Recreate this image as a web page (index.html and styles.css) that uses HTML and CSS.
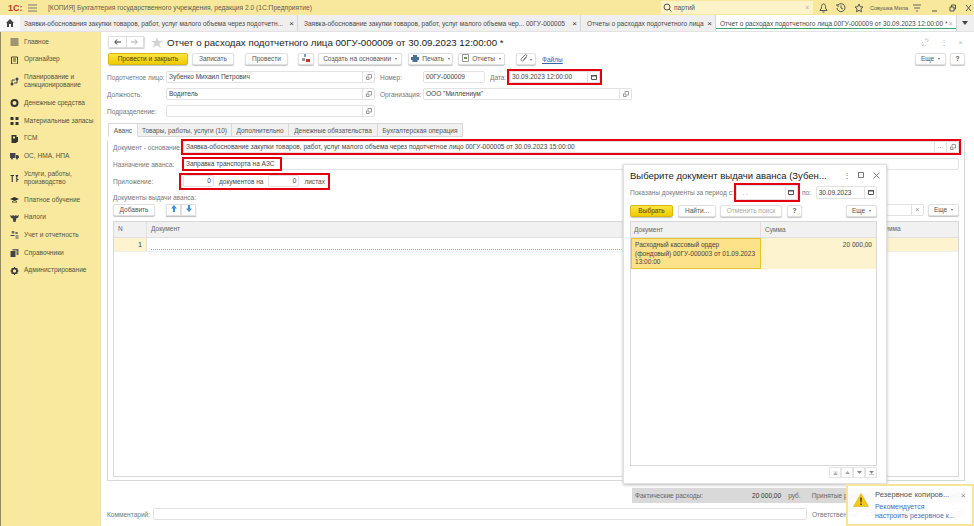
FILE: index.html
```html
<!DOCTYPE html>
<html lang="ru">
<head>
    <meta charset="UTF-8">
    <title>Отчет о расходах подотчетного лица</title>
    <link rel="stylesheet" href="styles.css">
</head>
<body>
    <header class="topbar">
        <span class="logo">1С:</span>
        <svg class="burger" width="9" height="8" viewBox="0 0 9 8"><path d="M0 1h9M0 4h9M0 7h9" stroke="#777" stroke-width="1"/></svg>
        <span class="app-title">[КОПИЯ] Бухгалтерия государственного учреждения, редакция 2.0 (1С:Предприятие)</span>
        <div class="search">
            <svg width="9" height="9" viewBox="0 0 9 9"><circle cx="4" cy="4" r="3" fill="none" stroke="#555"/><path d="M6 6l2.500 2.500" stroke="#555"/></svg>
            <span class="search-text">партий</span>
            <span class="search-x">×</span>
        </div>
        <div class="top-icons">
            <svg class="ti-bell" width="9" height="10" viewBox="0 0 9 10"><path d="M4.500 1C2.500 1 2.500 3 2.500 5L1 7.500h7L6.500 5C6.500 3 6.500 1 4.500 1zM3.500 9h2" fill="none" stroke="#555"/></svg>
            <svg class="ti-hist" width="10" height="10" viewBox="0 0 10 10"><path d="M2 2a4 4 0 1 1-1 3M5 2.500V5l2 1M1 1v2h2" fill="none" stroke="#555"/></svg>
            <svg class="ti-star" width="10" height="10" viewBox="0 0 10 10"><path d="M5 1l1.200 2.700 2.800.3-2.100 1.900.6 2.900L5 7.400 2.500 8.800l.6-2.900L1 4l2.800-.3z" fill="none" stroke="#555"/></svg>
            <span class="user">Совушка Мила</span>
            <svg class="ti-menu" width="9" height="8" viewBox="0 0 9 8"><path d="M0 1h8M1 4h6M3 7h2" stroke="#666"/></svg>
            <svg class="ti-min" width="7" height="8" viewBox="0 0 7 8"><path d="M1 7h5" stroke="#555"/></svg>
            <svg class="ti-max" width="7" height="8" viewBox="0 0 7 8"><path d="M1 3h4v4H1zM2.500 3V1h4v4H5" fill="none" stroke="#555"/></svg>
            <svg class="ti-close" width="7" height="8" viewBox="0 0 7 8"><path d="M1 1l5 6M6 1L1 7" stroke="#555"/></svg>
        </div>
    </header>

    <nav class="tabbar">
        <div class="home">
            <svg width="8" height="8" viewBox="0 0 8 8"><path d="M4 0L0 4h1v4h2V5h2v3h2V4h1z" fill="#444"/></svg>
        </div>
        <div class="wtab tab-1"><span class="wtab-text">Заявки-обоснования закупки товаров, работ, услуг малого объема через подотчетн...</span><i>×</i></div>
        <div class="wtab tab-2"><span class="wtab-text">Заявка-обоснование закупки товаров, работ, услуг малого объема чер... 00ГУ-000005</span><i>×</i></div>
        <div class="wtab tab-3"><span class="wtab-text">Отчеты о расходах подотчетного лица</span><i>×</i></div>
        <div class="wtab wtab-active tab-4"><span class="wtab-text">Отчет о расходах подотчетного лица 00ГУ-000009 от 30.09.2023 12:00:00 *</span><i>×</i></div>
        <svg class="tabs-more" width="6" height="4" viewBox="0 0 6 4"><path d="M0 0h6L3 4z" fill="#444"/></svg>
    </nav>

    <div class="workspace">
        <aside class="sidebar">
            <div class="side-item"><svg width="8" height="8" viewBox="0 0 8 8"><path d="M0 1h8M0 3h8M0 5h8M0 7h8" stroke="#444"/></svg><span>Главное</span></div>
            <div class="side-item"><svg width="8" height="8" viewBox="0 0 8 8"><path d="M1 1h6v7H1zM2.500 3h3M2.500 5h3" fill="none" stroke="#444"/></svg><span>Органайзер</span></div>
            <div class="side-item side-double"><svg width="9" height="9" viewBox="0 0 9 9"><circle cx="2" cy="7" r="1.500" fill="#444"/><circle cx="7" cy="2" r="1.500" fill="#444"/><path d="M2 6V3h3M7 3v3H4" fill="none" stroke="#444"/></svg><span>Планирование и санкционирование</span></div>
            <div class="side-item"><svg width="8" height="8" viewBox="0 0 8 8"><circle cx="4" cy="4" r="3" fill="none" stroke="#333" stroke-width="2"/></svg><span>Денежные средства</span></div>
            <div class="side-item"><svg width="8" height="8" viewBox="0 0 8 8"><path d="M0 0h3v3H0zM5 0h3v3H5zM0 5h3v3H0zM5 5h3v3H5z" fill="#333"/></svg><span>Материальные запасы</span></div>
            <div class="side-item"><svg width="8" height="8" viewBox="0 0 8 8"><path d="M1 0h5v8H1zM6 2h1.500v5H6z" fill="#333"/><path d="M2.500 1.500h2v2h-2z" fill="#f9e99e"/></svg><span>ГСМ</span></div>
            <div class="side-item"><svg width="9" height="8" viewBox="0 0 9 8"><path d="M0 1h5.500v5H0zM6 3h2l1 1.500V6H6z" fill="#444"/><circle cx="2" cy="6.500" r="1" fill="#444"/><circle cx="7" cy="6.500" r="1" fill="#444"/></svg><span>ОС, НМА, НПА</span></div>
            <div class="side-item side-double"><svg width="8" height="8" viewBox="0 0 8 8"><path d="M0 1h3.500v1H2.300v6H1.200V2H0zM5 1h3L6.800 3v2H8v1H6.800v2H5.800V3z" fill="#333"/></svg><span>Услуги, работы, производство</span></div>
            <div class="side-item"><svg width="9" height="8" viewBox="0 0 9 8"><path d="M4.500 1L9 3 4.500 5 0 3z" fill="#333"/><path d="M2 5v1.500h5V5L4.500 6z" fill="#333"/></svg><span>Платное обучение</span></div>
            <div class="side-item"><svg width="9" height="8" viewBox="0 0 9 8"><path d="M0 1l2 1 1-1 1.500 1L6 1l1 1 2-1-1 3H6.500L5.500 8h-2l-1-4H1z" fill="#444"/></svg><span>Налоги</span></div>
            <div class="side-item"><svg width="8" height="8" viewBox="0 0 8 8"><path d="M1 1h3M2.500 0v3M0 4.500h4M5 5h3M5 7h3M5 1l2 2M7 1L5 3" stroke="#444" fill="none"/></svg><span>Учет и отчетность</span></div>
            <div class="side-item"><svg width="8" height="8" viewBox="0 0 8 8"><path d="M0 2h5v6H0z" fill="#444"/><path d="M2 0h6v6H6V1.500H2z" fill="#666"/></svg><span>Справочники</span></div>
            <div class="side-item"><svg width="8" height="8" viewBox="0 0 8 8"><circle cx="4" cy="4" r="2.500" fill="none" stroke="#333" stroke-width="1.600"/><path d="M4 0v1.500M4 6.500V8M0 4h1.500M6.500 4H8M1.200 1.200l1 1M5.800 5.800l1 1M1.200 6.800l1-1M5.800 2.200l1-1" stroke="#333"/></svg><span>Администрирование</span></div>
        </aside>

        <main class="form">
            <div class="title-row">
                <div class="nav-buttons">
                    <button class="nav-btn"><svg width="7" height="6" viewBox="0 0 7 6"><path d="M7 3H1M3 .5L.8 3 3 5.500" fill="none" stroke="#333"/></svg></button>
                    <button class="nav-btn"><svg width="7" height="6" viewBox="0 0 7 6"><path d="M0 3h6M4 .5L6.200 3 4 5.500" fill="none" stroke="#aaa"/></svg></button>
                </div>
                <svg class="title-star" width="12" height="11" viewBox="0 0 12 11"><path d="M6 0l1.500 4H12L8.400 6.600 9.700 11 6 8.300 2.300 11l1.300-4.400L0 4h4.500z" fill="#d2d2d2"/></svg>
                <h1 class="doc-title">Отчет о расходах подотчетного лица 00ГУ-000009 от 30.09.2023 12:00:00 *</h1>
                <div class="title-tools">
                    <svg width="9" height="9" viewBox="0 0 9 9"><path d="M1 8l2-2M4 2l1-1c1-1 3 1 2 2L6 4M5 7L4 8C3 9 0 6 1 5l1-1" fill="none" stroke="#ccc"/></svg>
                    <span>⋮</span>
                    <span>×</span>
                </div>
            </div>

            <div class="command-bar">
                <button class="btn btn-primary btn-post-close">Провести и закрыть</button>
                <button class="btn btn-save">Записать</button>
                <button class="btn btn-post">Провести</button>
                <button class="btn btn-icon"><svg width="8" height="8" viewBox="0 0 8 8"><path d="M2 0h2v3H2z" fill="#7a9cc4"/><path d="M4 5h4v3H4z" fill="#c0392b"/><path d="M0 4h3v3H0z" fill="#999"/></svg></button>
                <button class="btn btn-create">Создать на основании <b class="caret"></b></button>
                <button class="btn btn-print"><svg width="8" height="7" viewBox="0 0 8 7"><path d="M2 0h4v2H2zM0 2h8v3H6.500v2h-5V5H0z" fill="#4a6d91"/></svg>Печать <b class="caret"></b></button>
                <button class="btn btn-reports"><svg width="7" height="8" viewBox="0 0 7 8"><path d="M.5.500h6v7h-6z" fill="#fff" stroke="#999"/><path d="M2 5h3V3H2z" fill="#6a9955"/></svg>Отчеты <b class="caret"></b></button>
                <button class="btn btn-clip"><svg width="8" height="8" viewBox="0 0 8 8"><path d="M6.500 3L3.500 6.500C2 8 0 6 1.500 4.500L5 1c1-1 2.500.5 1.500 1.500L3.500 5.500" fill="none" stroke="#777"/></svg><b class="caret"></b></button>
                <a class="files-link"><span>Файлы</span></a>
                <button class="btn btn-more">Еще <b class="caret"></b></button>
                <button class="btn btn-help">?</button>
            </div>

            <div class="field-row row-1">
                <label class="lbl lbl-main">Подотчетное лицо:</label>
                <div class="field field-main">Зубенко Михаил Петрович<span class="field-btn"><svg width="6" height="6" viewBox="0 0 6 6"><path d="M2 .5h3.500V4H2zM.5 2.500v3h3" fill="none" stroke="#999"/></svg></span></div>
                <label class="lbl lbl-number">Номер:</label>
                <div class="field field-number">00ГУ-000009</div>
                <label class="lbl lbl-date">Дата:</label>
                <div class="field field-date marked">30.09.2023 12:00:00<span class="field-btn"><svg width="6" height="6" viewBox="0 0 6 6"><path d="M.5 1.500h5v4h-5z" fill="none" stroke="#555"/><path d="M0 1h6v1.500H0z" fill="#555"/></svg></span></div>
            </div>
            <div class="field-row">
                <label class="lbl lbl-main">Должность:</label>
                <div class="field field-main">Водитель<span class="field-btn"><svg width="6" height="6" viewBox="0 0 6 6"><path d="M2 .5h3.500V4H2zM.5 2.500v3h3" fill="none" stroke="#999"/></svg></span></div>
                <label class="lbl lbl-number">Организация:</label>
                <div class="field field-org">ООО "Миллениум"<span class="field-btn"><svg width="6" height="6" viewBox="0 0 6 6"><path d="M2 .5h3.500V4H2zM.5 2.500v3h3" fill="none" stroke="#999"/></svg></span></div>
            </div>
            <div class="field-row">
                <label class="lbl lbl-main">Подразделение:</label>
                <div class="field field-main"><span class="field-btn"><svg width="6" height="6" viewBox="0 0 6 6"><path d="M2 .5h3.500V4H2zM.5 2.500v3h3" fill="none" stroke="#999"/></svg></span></div>
            </div>

            <div class="form-tabs">
                <span class="ftab ftab-active">Аванс</span>
                <span class="ftab">Товары, работы, услуги (10)</span>
                <span class="ftab">Дополнительно</span>
                <span class="ftab">Денежные обязательства</span>
                <span class="ftab">Бухгалтерская операция</span>
            </div>

            <div class="tab-body">
                <div class="field-row row-base">
                    <label class="lbl lbl-tab">Документ - основание:</label>
                    <div class="field field-base marked">Заявка-обоснование закупки товаров, работ, услуг малого объема через подотчетное лицо 00ГУ-000005 от 30.09.2023 15:00:00<span class="field-btn dots-btn">...</span><span class="field-btn"><svg width="6" height="6" viewBox="0 0 6 6"><path d="M2 .5h3.500V4H2zM.5 2.500v3h3" fill="none" stroke="#999"/></svg></span></div>
                </div>
                <div class="field-row">
                    <label class="lbl lbl-tab">Назначение аванса:</label>
                    <div class="field field-base purpose">
                        <span class="purpose-text">Заправка транспорта на АЗС</span>
                    </div>
                </div>
                <div class="field-row">
                    <label class="lbl lbl-tab">Приложение:</label>
                    <div class="attach marked">
                        <div class="field field-count">0</div>
                        <span>документов на</span>
                        <div class="field field-count">0</div>
                        <span>листах</span>
                    </div>
                </div>

                <div class="section-label">Документы выдачи аванса:</div>
                <div class="table-bar">
                    <button class="btn btn-add">Добавить</button>
                    <div class="arrows">
                        <button class="btn btn-arrow"><svg width="6" height="7" viewBox="0 0 6 7"><path d="M3 0l3 3.500H4V7H2V3.500H0z" fill="#3d8fd1"/></svg></button>
                        <button class="btn btn-arrow"><svg width="6" height="7" viewBox="0 0 6 7"><path d="M3 7l3-3.500H4V0H2v3.500H0z" fill="#3d8fd1"/></svg></button>
                    </div>
                    <div class="table-tools">
                        <div class="field field-table-search"><span class="field-btn">×</span></div>
                        <button class="btn btn-table-more">Еще <b class="caret"></b></button>
                    </div>
                </div>
                <div class="grid">
                    <div class="grid-head">
                        <span class="col-n">N</span>
                        <span class="col-doc">Документ</span>
                        <span class="col-sum">Сумма</span>
                    </div>
                    <div class="grid-row">
                        <span class="col-n cell-current">1</span>
                        <span class="col-doc cell-empty"></span>
                        <span class="col-sum cell-tail"></span>
                    </div>
                </div>
            </div>

            <div class="totals">
                <span class="tot-label">Фактические расходы:</span>
                <span class="tot-sum">20 000,00</span>
                <span class="tot-cur">руб.</span>
                <span class="tot-label">Принятые расходы:</span>
                <span class="tot-end">руб.</span>
            </div>
            <div class="field-row row-comment">
                <label class="lbl lbl-comment">Комментарий:</label>
                <div class="field field-comment"></div>
                <label class="lbl lbl-resp">Ответственный:</label>
                <div class="field field-resp">Совушка Мила<span class="field-btn"><svg width="6" height="6" viewBox="0 0 6 6"><path d="M2 .5h3.500V4H2zM.5 2.500v3h3" fill="none" stroke="#999"/></svg></span></div>
            </div>
        </main>
    </div>

    <section class="dialog">
        <div class="dlg-title-row">
            <h2 class="dlg-title">Выберите документ выдачи аванса (Зубен...</h2>
            <span class="dlg-dots">⋮</span>
            <svg class="dlg-tool" width="6" height="6" viewBox="0 0 6 6"><path d="M.5.500h5v5h-5z" fill="none" stroke="#777"/></svg>
            <svg class="dlg-tool" width="7" height="7" viewBox="0 0 7 7"><path d="M.5.500l6 6M6.500.500l-6 6" stroke="#777"/></svg>
        </div>
        <div class="dlg-period">
            <label class="lbl lbl-from">Показаны документы за период с:</label>
            <div class="field field-from marked"><span class="blank-date">. .</span><span class="field-btn"><svg width="6" height="6" viewBox="0 0 6 6"><path d="M.5 1.500h5v4h-5z" fill="none" stroke="#555"/><path d="M0 1h6v1.500H0z" fill="#555"/></svg></span></div>
            <label class="lbl lbl-to">по:</label>
            <div class="field field-to">30.09.2023<span class="field-btn"><svg width="6" height="6" viewBox="0 0 6 6"><path d="M.5 1.500h5v4h-5z" fill="none" stroke="#555"/><path d="M0 1h6v1.500H0z" fill="#555"/></svg></span></div>
        </div>
        <div class="dlg-bar">
            <button class="btn btn-primary btn-choose">Выбрать</button>
            <button class="btn btn-find">Найти...</button>
            <button class="btn btn-cancel" disabled>Отменить поиск</button>
            <button class="btn btn-dlg-help">?</button>
            <button class="btn btn-dlg-more">Еще <b class="caret"></b></button>
        </div>
        <div class="dlg-grid">
            <div class="dlg-head">
                <span class="dlg-col-doc">Документ</span>
                <span class="dlg-col-sum">Сумма</span>
            </div>
            <div class="dlg-row">
                <span class="dlg-col-doc dlg-current">Расходный кассовый ордер (фондовый) 00ГУ-000003 от 01.09.2023 13:00:00</span>
                <span class="dlg-col-sum dlg-amount">20 000,00</span>
            </div>
        </div>
        <div class="pager">
            <span class="page-btn"><svg width="5" height="4" viewBox="0 0 5 4"><path d="M0 1h5M.5 4l2-2.500 2 2.500z" fill="#aaa" stroke="#aaa" stroke-width=".5"/></svg></span>
            <span class="page-btn"><svg width="5" height="3" viewBox="0 0 5 3"><path d="M0 3l2.500-3L5 3z" fill="#aaa"/></svg></span>
            <span class="page-btn"><svg width="5" height="3" viewBox="0 0 5 3"><path d="M0 0l2.500 3L5 0z" fill="#888"/></svg></span>
            <span class="page-btn"><svg width="5" height="4" viewBox="0 0 5 4"><path d="M0 3.500h5M.5 0l2 2.500L4.500 0z" fill="#888" stroke="#888" stroke-width=".5"/></svg></span>
        </div>
    </section>

    <aside class="notice">
        <svg class="notice-icon" width="16" height="14" viewBox="0 0 16 14"><path d="M8 .5L15.500 13.500H.5z" fill="#f6c915" stroke="#c9a40c" stroke-width=".5"/><path d="M7.200 4.500h1.600L8.500 9.500h-1zM7.200 10.500h1.600V12H7.200z" fill="#333"/></svg>
        <div class="notice-body">
            <div class="notice-title">Резервное копиров...</div>
            <a class="notice-link">Рекомендуется<br>настроить резервное к...</a>
        </div>
        <span class="notice-x">×</span>
    </aside>
</body>
</html>
```

FILE: styles.css
```css
* {
    box-sizing: border-box;
}
html, body {
    margin: 0;
    padding: 0;
}
body {
    position: relative;
    width: 974px;
    height: 526px;
    overflow: hidden;
    font-family: "Liberation Sans", Arial, sans-serif;
    font-size: 6.55px;
    color: #4a4a4a;
    background-color: #fff;
}
button {
    font-family: inherit;
    padding: 0;
}

/* Top bar */
.topbar {
    display: flex;
    align-items: center;
    height: 15px;
    background-color: #f8e89c;
}
.logo {
    width: 28px;
    padding-left: 8px;
    font-size: 9px;
    font-weight: bold;
    color: #c8372d;
}
.burger {
    margin-right: 11px;
}
.app-title {
    width: 613px;
    font-size: 6.660px;
    color: #5f5d4c;
}
.search {
    display: flex;
    align-items: center;
    gap: 2px;
    width: 152px;
    height: 13px;
    padding: 0 4px 0 2px;
    background-color: #fcf4c8;
}
.search-text {
    flex: 1;
    color: #555;
}
.search-x {
    color: #aaa;
}
.top-icons {
    display: flex;
    align-items: center;
    padding-left: 6px;
}
.ti-hist, .ti-star { margin-left: 8px; }
.user {
    width: 38px;
    margin-left: 6px;
    font-size: 5.500px;
    white-space: nowrap;
    color: #555;
}
.ti-menu { margin-left: 5px; }
.ti-min { margin-left: 9px; }
.ti-max { margin-left: 11px; }
.ti-close { margin-left: 9px; }

/* Window tabs */
.tabbar {
    display: flex;
    align-items: stretch;
    height: 17px;
    background-color: #efefef;
    border-bottom: 1px solid #e2e2e2;
}
.home {
    display: flex;
    align-items: center;
    justify-content: center;
    width: 20px;
    background-color: #fafafa;
}
.wtab {
    display: flex;
    align-items: center;
    justify-content: space-between;
    padding: 0 3px 0 4px;
    border-right: 1px solid #d5d5d5;
    white-space: nowrap;
}
.wtab i {
    font-style: normal;
    font-size: 8px;
    color: #333;
}
.tab-1 {
    width: 278px;
}
.tab-2 {
    width: 283px;
    padding-left: 6px;
}
.tab-3 {
    width: 135px;
    padding-left: 6px;
}
.tab-4 {
    width: 241px;
}
.wtab-active {
    background: linear-gradient(#fff 13px, #3fa66f 13px, #3fa66f 14.500px, #fff 14.500px);
}
.wtab-active i {
    color: #aaa;
}
.tabs-more {
    align-self: center;
    margin-left: 5px;
}

/* Left menu */
.workspace {
    display: flex;
    height: 494px;
}
.sidebar {
    width: 101px;
    padding-top: 1px;
    background-color: #f9e99e;
    border-left: 1px solid #8f8a60;
    border-right: 1px solid #e8e0b5;
    flex-shrink: 0;
}
.side-item {
    display: flex;
    align-items: center;
    height: 17.700px;
    padding-left: 9px;
    color: #55533f;
    line-height: 8.500px;
}
.side-item svg {
    flex-shrink: 0;
    width: 9px;
    margin-right: 5px;
}
.side-double {
    height: 26px;
}

/* Form */
.form {
    flex: 1;
    min-width: 0;
    padding: 3px 9px 0 6px;
}
.title-row {
    display: flex;
    align-items: center;
    height: 14px;
    margin-left: 1px;
}
.nav-buttons {
    display: flex;
    width: 37px;
    height: 12px;
    border: 1px solid #ddd;
    border-radius: 2px;
    box-shadow: 0 1px 1px #ccc;
}
.nav-btn {
    flex: 1;
    display: flex;
    align-items: center;
    justify-content: center;
    background-color: #fff;
    border: none;
    border-right: 1px solid #ddd;
}
.title-star {
    margin: 0 4px 0 6px;
}
.doc-title {
    flex: 1;
    margin: 0;
    font-size: 9.700px;
    font-weight: normal;
    color: #222;
    white-space: nowrap;
}
.title-tools {
    display: flex;
    align-items: center;
    gap: 10px;
    margin-right: 2px;
    color: #bbb;
    font-size: 8px;
}

.btn {
    height: 12px;
    background-color: #fff;
    border: 1px solid #e0e0e0;
    border-radius: 2px;
    box-shadow: 0 1px 1px #c4c4c4;
    font-size: 6.550px;
    line-height: 10px;
    color: #555;
    white-space: nowrap;
}
.btn-primary {
    background: linear-gradient(#fbe443, #f0cb00);
    border-color: #d8b80c;
    color: #4f4500;
}
.caret {
    display: inline-block;
    width: 0;
    height: 0;
    margin-left: 2px;
    vertical-align: middle;
    border-left: 1.500px solid transparent;
    border-right: 1.500px solid transparent;
    border-top: 2px solid #666;
}
.command-bar {
    display: flex;
    align-items: center;
    height: 12px;
    margin: 4px 0 0 1px;
}
.btn-post-close { width: 80px; }
.btn-save { width: 42px; margin-left: 4px; }
.btn-post { width: 43px; margin-left: 11px; }
.btn-icon { width: 16px; margin-left: 10px; }
.btn-create { width: 84px; margin-left: 4px; }
.btn-print { width: 45px; margin-left: 6px; }
.btn-reports { width: 47px; margin-left: 5px; }
.btn-clip { width: 20px; margin-left: 11px; }
.btn-print svg, .btn-reports svg {
    margin-right: 3px;
    vertical-align: -1px;
}
.files-link {
    width: 373px;
    margin-left: 6px;
    color: #3b62b0;
}
.files-link span {
    text-decoration: underline;
}
.btn-more { width: 31px; }
.btn-help { width: 15px; margin-left: 4px; font-weight: bold; }

.field-row {
    display: flex;
    align-items: center;
    height: 12px;
    margin-top: 5px;
}
.row-1 {
    margin-top: 6px;
}
.lbl {
    color: #777;
    white-space: nowrap;
}
.lbl-main { width: 59px; }
.lbl-number { width: 43px; margin-left: 5px; }
.lbl-date { width: 19px; margin-left: 5px; }
.field {
    position: relative;
    height: 12px;
    padding: 0 2px;
    background-color: #fff;
    border: 1px solid #e2e2e2;
    border-radius: 2px;
    line-height: 10px;
    color: #444;
    white-space: nowrap;
}
.field-btn {
    position: absolute;
    top: 0;
    right: 0;
    display: flex;
    align-items: center;
    justify-content: center;
    width: 12px;
    height: 100%;
    border-left: 1px solid #e2e2e2;
    color: #888;
}
.dots-btn {
    right: 12px;
    align-items: flex-start;
    line-height: 7px;
}
.marked {
    outline: 2px solid #e4000f;
    border-radius: 0;
}
.field-main { width: 209px; }
.field-number { width: 62px; }
.field-date { width: 91px; }
.field-org { width: 209px; }

/* Form tabs */
.form-tabs {
    display: flex;
    height: 14px;
    margin: 6px 0 0 1px;
}
.ftab {
    padding-top: 2px;
    height: 14px;
    background-color: #f1f1f1;
    border: 1px solid #d8d8d8;
    border-left: none;
    line-height: 9px;
    text-align: center;
    white-space: nowrap;
    color: #555;
}
.ftab:nth-child(1) { width: 30px; }
.ftab:nth-child(2) { width: 94px; }
.ftab:nth-child(3) { width: 57px; }
.ftab:nth-child(4) { width: 89px; }
.ftab:nth-child(5) { width: 85px; }
.ftab-active {
    background-color: #fff;
    border-left: 1px solid #d8d8d8;
    border-bottom-color: #fff;
}
.tab-body {
    height: 340px;
    padding: 0 5px;
    border: 1px solid #d8d8d8;
    border-top: none;
}
.row-base {
    margin-top: 4px;
}
.lbl-tab {
    width: 70px;
}
.field-base {
    width: 777px;
}
.purpose {
    padding: 0;
}
.purpose-text {
    display: block;
    width: 96px;
    height: 10px;
    padding-left: 2px;
    outline: 2px solid #e4000f;
}
.attach {
    display: flex;
    align-items: center;
    gap: 5px;
    width: 147px;
    height: 13px;
    margin-left: -2px;
    padding: 0 3px 0 2px;
    white-space: nowrap;
}
.field-count {
    width: 31px;
    text-align: right;
}
.section-label {
    margin-top: 6px;
    height: 9px;
    line-height: 9px;
    color: #777;
}
.table-bar {
    display: flex;
    align-items: center;
    height: 12px;
    margin-top: 2px;
}
.btn-add { width: 42px; }
.arrows {
    display: flex;
    margin-left: 11px;
}
.btn-arrow {
    width: 15px;
    border-radius: 0;
}
.table-tools {
    display: flex;
    align-items: center;
    gap: 4px;
    margin-left: auto;
}
.field-table-search { width: 40px; }
.btn-table-more { width: 31px; }

.grid {
    height: 256px;
    margin-top: 5px;
    border: 1px solid #d8d8d8;
}
.grid-head {
    display: flex;
    height: 16px;
    line-height: 14px;
    background-color: #f1f1f1;
    border-bottom: 1px solid #e0e0e0;
    color: #666;
}
.grid-row {
    display: flex;
    height: 14px;
    line-height: 14px;
    border-bottom: 1px solid #eee;
}
.col-n {
    width: 33px;
    padding: 0 4px;
    border-right: 1px solid #e0e0e0;
}
.col-doc {
    width: 733px;
    padding: 0 4px;
}
.col-sum {
    flex: 1;
}
.cell-current {
    text-align: right;
    background-color: #fdf3cf;
    color: #333;
}
.cell-empty {
    height: 12px;
    margin-left: 4px;
    width: 729px;
    border-bottom: 1px dotted #e38b8b;
}
.cell-tail {
    background-color: #fdf3cf;
}

/* Bottom */
.totals {
    display: flex;
    align-items: center;
    gap: 7px;
    width: 333px;
    height: 15px;
    margin: 7px 0 0 525px;
    padding: 0 3px;
    background-color: #d9d9d9;
    color: #666;
}
.totals .tot-label:first-child {
    width: 110px;
}
.tot-sum {
    color: #333;
}
.tot-cur {
    margin-right: 4px;
}
.tot-end {
    margin-left: auto;
}
.row-comment {
    margin-top: 5px;
}
.lbl-comment { width: 46px; }
.field-comment { width: 654px; }
.lbl-resp { width: 50px; margin-left: 5px; }
.field-resp { width: 103px; }

/* Dialog over the form */
.dialog {
    position: absolute;
    left: 623px;
    top: 164px;
    width: 264px;
    height: 320px;
    padding: 0 9px 0 6px;
    background-color: #fff;
    border: 1px solid #e0e0e0;
    box-shadow: 0 1px 3px #bbb;
}
.dlg-title-row {
    display: flex;
    align-items: center;
    height: 18px;
    margin: 1px -3px 0 0;
}
.dlg-title {
    width: 213px;
    margin: 0;
    font-size: 9.500px;
    font-weight: normal;
    color: #222;
    white-space: nowrap;
}
.dlg-dots {
    width: 6px;
    color: #777;
    font-size: 8px;
    text-align: center;
}
.dlg-tool {
    flex-shrink: 0;
    margin-left: 9px;
}
.dlg-period {
    display: flex;
    align-items: center;
    height: 14px;
    margin-top: 1px;
}
.lbl-from {
    width: 107px;
}
.field-from {
    width: 63px;
    height: 15px;
    line-height: 13px;
}
.blank-date {
    padding-left: 4px;
    color: #999;
}
.lbl-to {
    width: 14px;
    margin-left: 4px;
}
.field-to {
    width: 62px;
    height: 13px;
    line-height: 11px;
}
.dlg-bar {
    display: flex;
    align-items: center;
    height: 12px;
    margin-top: 6px;
}
.btn-choose { width: 43px; }
.btn-find { width: 38px; margin-left: 5px; }
.btn-cancel {
    width: 62px;
    margin-left: 4px;
    color: #aaa;
}
.btn-dlg-help { width: 15px; margin-left: 5px; font-weight: bold; }
.btn-dlg-more { width: 31px; margin-left: auto; }
.dlg-grid {
    height: 245px;
    margin-top: 4px;
    border: 1px solid #d8d8d8;
}
.dlg-head {
    display: flex;
    height: 16px;
    line-height: 15px;
    background-color: #f1f1f1;
    border-bottom: 1px solid #e0e0e0;
    color: #666;
}
.dlg-col-doc {
    width: 130px;
    padding: 0 3px;
    border-right: 1px solid #e0e0e0;
}
.dlg-col-sum {
    flex: 1;
    padding: 0 4px;
}
.dlg-row {
    display: flex;
    height: 31px;
    line-height: 8.500px;
    color: #444;
}
.dlg-current {
    padding: 2px 3px;
    background-color: #fde28a;
    border: 1px solid #e4c22f;
}
.dlg-amount {
    padding-top: 3px;
    text-align: right;
    background-color: #fdf3cf;
}
.pager {
    display: flex;
    justify-content: flex-end;
    margin-top: 1px;
}
.page-btn {
    display: flex;
    align-items: center;
    justify-content: center;
    width: 12px;
    height: 11px;
    border: 1px solid #e4e4e4;
}

/* Notification in the corner */
.notice {
    position: absolute;
    right: 0;
    bottom: 0;
    display: flex;
    width: 128px;
    height: 42px;
    padding: 7px 0 0 5px;
    background-color: rgba(255, 255, 255, 0.92);
    border: 2px solid #f7e39a;
}
.notice-icon {
    flex-shrink: 0;
    margin-right: 6px;
}
.notice-title {
    width: 80px;
    margin-top: -2px;
    line-height: 8px;
    font-size: 7.600px;
    color: #555;
    white-space: nowrap;
}
.notice-link {
    display: block;
    margin-top: 4px;
    font-size: 7px;
    line-height: 8.500px;
    color: #4a6fb5;
    white-space: nowrap;
}
.notice-x {
    margin-top: -2px;
    margin-left: 6px;
    color: #888;
    font-size: 8px;
}
```
